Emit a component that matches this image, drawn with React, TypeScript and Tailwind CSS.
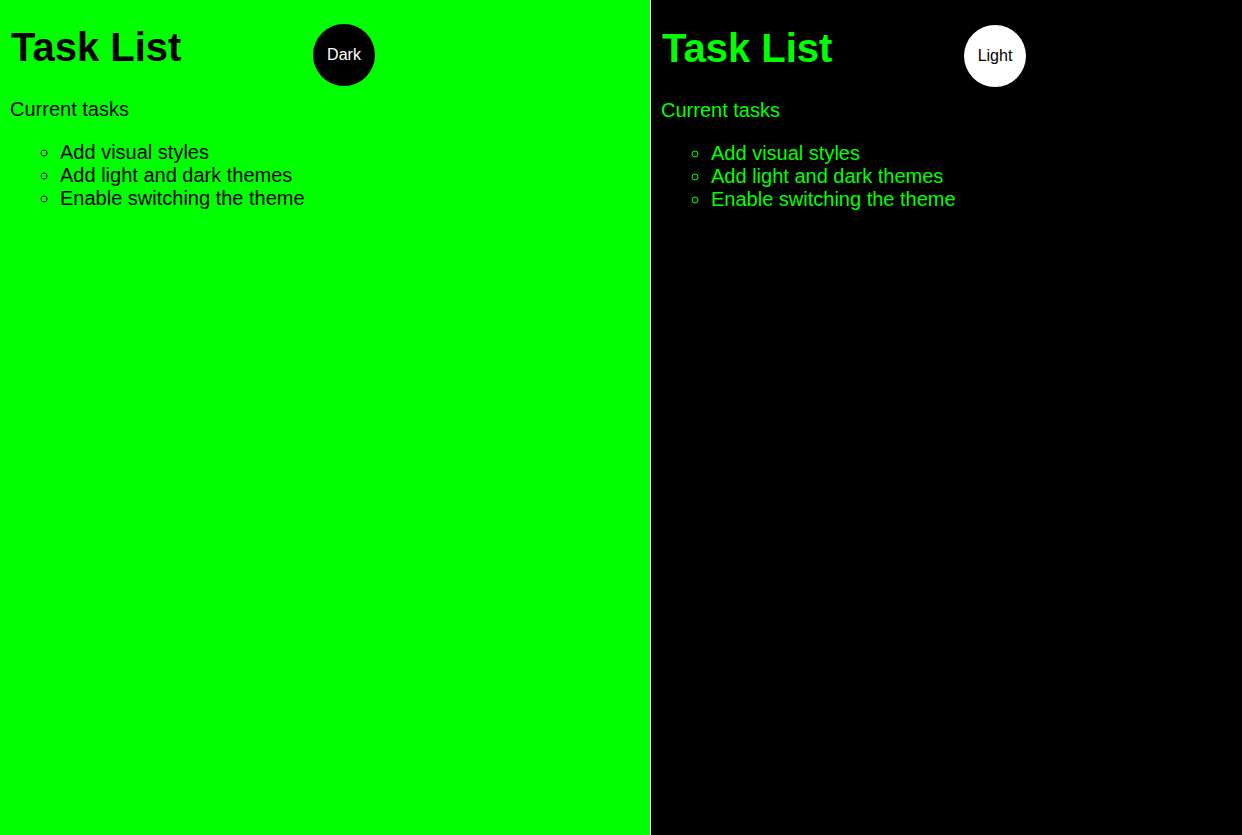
import React from "react";

function Panel({ dark }: { dark: boolean }) {
  return (
    <div
      className={
        dark
          ? "flex-1 bg-black text-[#00ff00] pl-[10px] pt-[25px] pr-[10px]"
          : "w-[650px] bg-[#00ff00] text-black pl-[10px] pt-[24px] pr-[10px]"
      }
    >
      <div className="flex w-[365px] items-start justify-between">
        <h1 className="m-0 pl-px text-[40px] font-bold leading-[46px]">Task List</h1>
        <button
          className={
            dark
              ? "flex h-[62px] w-[62px] items-center justify-center rounded-full bg-white text-[16px] text-black"
              : "flex h-[62px] w-[62px] items-center justify-center rounded-full bg-black text-[16px] text-white"
          }
        >
          {dark ? "Light" : "Dark"}
        </button>
      </div>
      <p className="mt-[12px] text-[20px] leading-[23px]">Current tasks</p>
      <ul className="mt-[20px] list-[circle] pl-[50px] text-[20px] leading-[23px]">
        <li>Add visual styles</li>
        <li>Add light and dark themes</li>
        <li>Enable switching the theme</li>
      </ul>
    </div>
  );
}

export default function App() {
  return (
    <div
      className="flex h-[835px] w-[1242px] overflow-hidden"
      style={{ fontFamily: '"Liberation Sans", Arial, sans-serif' }}
    >
      <Panel dark={false} />
      <div className="w-px bg-white" />
      <Panel dark={true} />
    </div>
  );
}
